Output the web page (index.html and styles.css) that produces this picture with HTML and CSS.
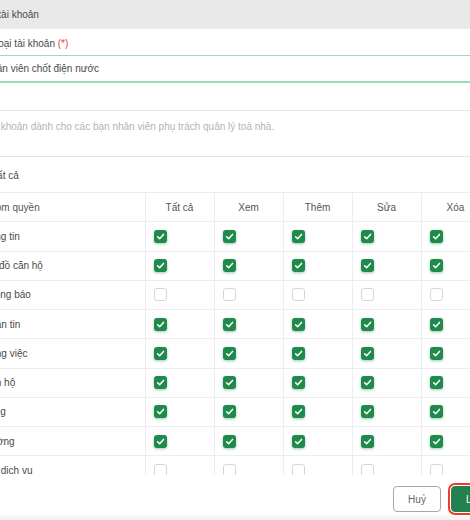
FILE: index.html
```html
<!DOCTYPE html>
<html lang="vi">
<head>
  <meta charset="UTF-8">
  <title>Thêm tài khoản</title>
  <link rel="stylesheet" href="styles.css">
</head>
<body>

  <div class="modal">
    <div class="modal-header">Thêm tài khoản</div>

    <div class="modal-body">
      <label class="field-label">Tên loại tài khoản <span class="req">(*)</span></label>
      <input class="field-input" type="text" value="Nhân viên chốt điện nước">

      <label class="field-label">Mô tả</label>
      <textarea class="field-area" placeholder="Tài khoản dành cho các bạn nhân viên phụ trách quản lý toà nhà."></textarea>

      <label class="check-all"><span class="cb"></span>Tất cả</label>

      <div class="table-wrap">
        <table class="perm">
          <thead>
            <tr>
              <th class="name">Nhóm quyền</th>
              <th>Tất cả</th>
              <th>Xem</th>
              <th>Thêm</th>
              <th>Sửa</th>
              <th>Xóa</th>
            </tr>
          </thead>
          <tbody id="rows"></tbody>
        </table>
      </div>
    </div>

    <div class="modal-footer">
      <button class="btn btn-cancel">Huỷ</button>
      <button class="btn btn-save">Lưu</button>
    </div>
  </div>
  <div class="shade"></div>

  <script>
    const nhom = [
      ['Bảng tin', true],
      ['Sơ đồ căn hộ', true],
      ['Thông báo', false],
      ['Nhắn tin', true],
      ['Công việc', true],
      ['Căn hộ', true],
      ['Tầng', true],
      ['Đường', true],
      ['Phí dịch vụ', false],
      ['Phương tiện', false]
    ];

    const tick = '<svg viewBox="0 0 13 13" width="13" height="13"><path d="M3.6 6.8l2 2 3.9-4.4" fill="none" stroke="#fff" stroke-width="1.5" stroke-linecap="round" stroke-linejoin="round"/></svg>';

    const tbody = document.getElementById('rows');
    nhom.forEach(([ten, on]) => {
      let html = '<td class="name">' + ten + '</td>';
      for (let i = 0; i < 5; i++) {
        html += '<td><span class="cb' + (on ? ' on' : '') + '">' + (on ? tick : '') + '</span></td>';
      }
      const tr = document.createElement('tr');
      tr.innerHTML = html;
      tbody.appendChild(tr);
    });
  </script>

</body>
</html>
```

FILE: styles.css
```css
body {
  margin: 0;
  background: #fff;
  color: #4a4a4a;
  font-family: 'Liberation Sans', Arial, sans-serif;
  font-size: 10px;
  overflow: hidden;
  height: 520px;
}

.modal {
  margin-left: -46px;
  width: 556px;
  background: #fff;
}

.modal-header {
  height: 29px;
  line-height: 29px;
  padding-left: 16px;
  background: #e9e9ea;
  color: #4a4a4a;
}

.modal-body {
  padding: 8px 20px 0 16px;
}

.field-label {
  display: block;
  line-height: 14px;
  margin-bottom: 4px;
  padding-left: 6px;
}

.req { color: #e5403a; }

.field-input {
  display: block;
  box-sizing: border-box;
  width: 100%;
  height: 28px;
  margin: 0;
  padding: 0 13px;
  border: 1px solid #98e0b4;
  border-bottom-width: 2px;
  border-radius: 3px;
  font: inherit;
  color: #4a4a4a;
  outline: none;
}

.field-input + .field-label {
  margin-top: 6px;
  margin-bottom: 7px;
  padding-left: 0;
}

.field-area {
  display: block;
  box-sizing: border-box;
  width: 100%;
  height: 47px;
  margin: 0;
  padding: 9px 13px;
  border: 1px solid #e4e4e6;
  border-radius: 3px;
  font: inherit;
  line-height: 14px;
  resize: none;
}

.field-area::placeholder { color: #b3b3b8; }

.check-all {
  display: flex;
  align-items: center;
  gap: 8px;
  height: 16px;
  margin: 10px 0 9px;
}

.table-wrap {
  height: 283px;
  overflow: hidden;
}

.perm {
  border-collapse: collapse;
  table-layout: fixed;
  width: 520px;
}

.perm th,
.perm td {
  box-sizing: border-box;
  height: 29.25px;
  padding: 0 8px;
  border: 1px solid #ececf2;
  border-left: none;
  vertical-align: middle;
  text-align: left;
}

.perm th {
  font-weight: normal;
  color: #555;
  text-align: center;
  width: 69px;
}

.perm th.name {
  width: 175px;
  text-align: left;
}

.perm .name { padding-left: 13px; }

.cb {
  display: inline-block;
  box-sizing: border-box;
  width: 13px;
  height: 13px;
  border: 1px solid #d6d6da;
  border-radius: 3px;
  background: #fff;
  vertical-align: middle;
}

.cb.on {
  border: none;
  background: #1f8a4c;
  box-shadow: 0 1px 3px rgba(31, 138, 76, 0.45);
}

.cb svg { display: block; }

.modal-footer {
  display: flex;
  justify-content: flex-end;
  gap: 10px;
  padding: 11px 11px 0 0;
  height: 27px;
}

.btn {
  box-sizing: border-box;
  height: 26px;
  width: 48px;
  padding: 0;
  border-radius: 4px;
  font: inherit;
  cursor: pointer;
}

.btn-cancel {
  background: #fff;
  border: 1px solid #a8a8ab;
  color: #666;
}

.btn-save {
  background: #23814f;
  border: 1px solid #23814f;
  color: #fff;
  outline: 2px solid #ef3b2c;
  outline-offset: 1px;
}

.shade {
  height: 7px;
  background: linear-gradient(#fff, #efeff0);
}
```
